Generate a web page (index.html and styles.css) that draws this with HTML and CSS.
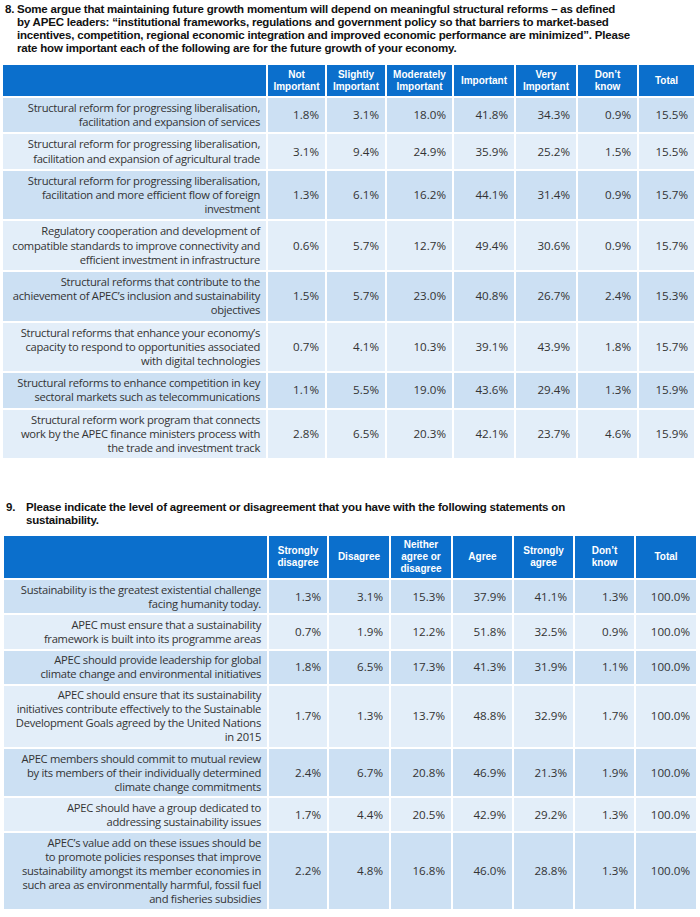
FILE: index.html
```html
<!DOCTYPE html>
<html>
<head>
<meta charset="utf-8">
<link rel="stylesheet" href="styles.css">
</head>
<body>
<div class="page">
  <div class="question q8">
    <span class="num">8.</span>
    <span class="qtext">Some argue that maintaining future growth momentum will depend on meaningful structural reforms – as defined<br>by APEC leaders: “institutional frameworks, regulations and government policy so that barriers to market-based<br>incentives, competition, regional economic integration and improved economic performance are minimized”. Please<br>rate how important each of the following are for the future growth of your economy.</span>
  </div>

  <table class="survey t1">
    <colgroup>
      <col class="c-label"><col style="width:59px"><col style="width:60px"><col style="width:67px"><col style="width:62px"><col style="width:62px"><col style="width:61px"><col style="width:56px">
    </colgroup>
    <thead>
      <tr><th></th><th>Not<br>Important</th><th>Slightly<br>Important</th><th>Moderately<br>Important</th><th>Important</th><th>Very<br>Important</th><th>Don’t<br>know</th><th>Total</th></tr>
    </thead>
    <tbody>
      <tr><td class="label">Structural reform for progressing liberalisation,<br>facilitation and expansion of services</td><td>1.8%</td><td>3.1%</td><td>18.0%</td><td>41.8%</td><td>34.3%</td><td>0.9%</td><td>15.5%</td></tr>
      <tr><td class="label">Structural reform for progressing liberalisation,<br>facilitation and expansion of agricultural trade</td><td>3.1%</td><td>9.4%</td><td>24.9%</td><td>35.9%</td><td>25.2%</td><td>1.5%</td><td>15.5%</td></tr>
      <tr><td class="label">Structural reform for progressing liberalisation,<br>facilitation and more efficient flow of foreign<br>investment</td><td>1.3%</td><td>6.1%</td><td>16.2%</td><td>44.1%</td><td>31.4%</td><td>0.9%</td><td>15.7%</td></tr>
      <tr><td class="label">Regulatory cooperation and development of<br>compatible standards to improve connectivity and<br>efficient investment in infrastructure</td><td>0.6%</td><td>5.7%</td><td>12.7%</td><td>49.4%</td><td>30.6%</td><td>0.9%</td><td>15.7%</td></tr>
      <tr><td class="label">Structural reforms that contribute to the<br>achievement of APEC’s inclusion and sustainability<br>objectives</td><td>1.5%</td><td>5.7%</td><td>23.0%</td><td>40.8%</td><td>26.7%</td><td>2.4%</td><td>15.3%</td></tr>
      <tr><td class="label">Structural reforms that enhance your economy’s<br>capacity to respond to opportunities associated<br>with digital technologies</td><td>0.7%</td><td>4.1%</td><td>10.3%</td><td>39.1%</td><td>43.9%</td><td>1.8%</td><td>15.7%</td></tr>
      <tr><td class="label">Structural reforms to enhance competition in key<br>sectoral markets such as telecommunications</td><td>1.1%</td><td>5.5%</td><td>19.0%</td><td>43.6%</td><td>29.4%</td><td>1.3%</td><td>15.9%</td></tr>
      <tr><td class="label">Structural reform work program that connects<br>work by the APEC finance ministers process with<br>the trade and investment track</td><td>2.8%</td><td>6.5%</td><td>20.3%</td><td>42.1%</td><td>23.7%</td><td>4.6%</td><td>15.9%</td></tr>
    </tbody>
  </table>

  <div class="question q9">
    <span class="num">9.</span>
    <span class="qtext">Please indicate the level of agreement or disagreement that you have with the following statements on<br>sustainability.</span>
  </div>

  <table class="survey t2">
    <colgroup>
      <col class="c-label"><col style="width:60px"><col style="width:62px"><col style="width:62px"><col style="width:61px"><col style="width:61px"><col style="width:61px"><col style="width:61px">
    </colgroup>
    <thead>
      <tr><th></th><th>Strongly<br>disagree</th><th>Disagree</th><th>Neither<br>agree or<br>disagree</th><th>Agree</th><th>Strongly<br>agree</th><th>Don’t<br>know</th><th>Total</th></tr>
    </thead>
    <tbody>
      <tr><td class="label">Sustainability is the greatest existential challenge<br>facing humanity today.</td><td>1.3%</td><td>3.1%</td><td>15.3%</td><td>37.9%</td><td>41.1%</td><td>1.3%</td><td>100.0%</td></tr>
      <tr><td class="label">APEC must ensure that a sustainability<br>framework is built into its programme areas</td><td>0.7%</td><td>1.9%</td><td>12.2%</td><td>51.8%</td><td>32.5%</td><td>0.9%</td><td>100.0%</td></tr>
      <tr><td class="label">APEC should provide leadership for global<br>climate change and environmental initiatives</td><td>1.8%</td><td>6.5%</td><td>17.3%</td><td>41.3%</td><td>31.9%</td><td>1.1%</td><td>100.0%</td></tr>
      <tr><td class="label">APEC should ensure that its sustainability<br>initiatives contribute effectively to the Sustainable<br>Development Goals agreed by the United Nations<br>in 2015</td><td>1.7%</td><td>1.3%</td><td>13.7%</td><td>48.8%</td><td>32.9%</td><td>1.7%</td><td>100.0%</td></tr>
      <tr><td class="label">APEC members should commit to mutual review<br>by its members of their individually determined<br>climate change commitments</td><td>2.4%</td><td>6.7%</td><td>20.8%</td><td>46.9%</td><td>21.3%</td><td>1.9%</td><td>100.0%</td></tr>
      <tr><td class="label">APEC should have a group dedicated to<br>addressing sustainability issues</td><td>1.7%</td><td>4.4%</td><td>20.5%</td><td>42.9%</td><td>29.2%</td><td>1.3%</td><td>100.0%</td></tr>
      <tr><td class="label">APEC’s value add on these issues should be<br>to promote policies responses that improve<br>sustainability amongst its member economies in<br>such area as environmentally harmful, fossil fuel<br>and fisheries subsidies</td><td>2.2%</td><td>4.8%</td><td>16.8%</td><td>46.0%</td><td>28.8%</td><td>1.3%</td><td>100.0%</td></tr>
    </tbody>
  </table>
</div>
</body>
</html>
```
FILE: styles.css
```css
* { box-sizing: border-box; }
html, body { margin: 0; padding: 0; background: #fff; }
body {
  font-family: "Open Sans", "Noto Sans", "DejaVu Sans", sans-serif;
  color: #333;
}
.page {
  width: 700px;
  padding: 3px 0 0 0;
}
.question {
  display: flex;
  font-family: "Liberation Sans", Arial, sans-serif;
  font-weight: bold;
  font-size: 11.5px;
  letter-spacing: -0.2px;
  line-height: 13px;
  color: #111;
  white-space: nowrap;
}
.question .num { flex: none; }
.q8 { padding-left: 5px; }
.q8 .num { width: 12px; }
.q9 { padding-left: 6px; margin-top: 43px; }
.q9 .num { width: 20px; }

.survey {
  border-collapse: collapse;
  table-layout: fixed;
  font-size: 11.6px;
}
.t1 { margin: 10px 0 0 3px; width: 691px; line-height: 14.2px; }
.t2 { margin: 9px 0 0 4px; width: 691px; line-height: 14px; }
.c-label { width: 264px; }

.survey th, .survey td {
  border: 2px solid #fff;
  padding: 3px 6px;
  vertical-align: middle;
}
.t2 td { padding-top: 2.6px; padding-bottom: 2.6px; }
.survey th {
  background: #0b6fcc;
  color: #fff;
  font-family: "Liberation Sans", Arial, sans-serif;
  font-weight: bold;
  font-size: 10px;
  line-height: 12px;
  text-align: center;
  padding: 3px 1px;
}
.survey thead tr th { border-top: 0; }
.survey tr > :first-child { border-left: 0; }
.survey tr > :last-child { border-right: 0; }
.t1 thead th { height: 32px; }
.t2 thead th { height: 41px; }
.survey td { text-align: right; white-space: nowrap; }
.survey td.label { font-size: 11.2px; letter-spacing: -0.28px; padding-right: 6px; }
.survey tbody tr:nth-child(odd) td { background: #cce0f3; }
.survey tbody tr:nth-child(even) td { background: #e3eef9; }
.survey tbody tr:last-child td { border-bottom: 0; }
```
